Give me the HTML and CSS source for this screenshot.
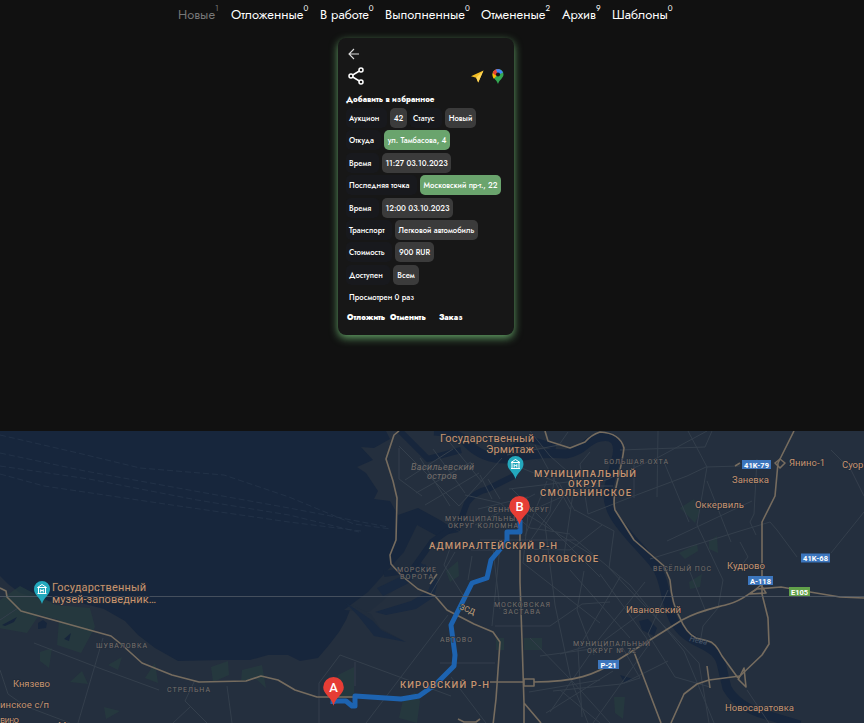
FILE: index.html
```html
<!DOCTYPE html>
<html lang="ru">
<head>
<meta charset="utf-8">
<title>Заказы</title>
<link rel="stylesheet" href="styles.css">
</head>
<body>
<nav class="tabs">
<a class="tab tab-new muted">Новые<sup>1</sup></a>
<a class="tab tab-delayed">Отложенные<sup>0</sup></a>
<a class="tab tab-work">В работе<sup>0</sup></a>
<a class="tab tab-done">Выполненные<sup>0</sup></a>
<a class="tab tab-cancelled">Отмененые<sup>2</sup></a>
<a class="tab tab-archive">Архив<sup>9</sup></a>
<a class="tab tab-templates">Шаблоны<sup>0</sup></a>
</nav>
<main class="content">
<article class="card">
<svg class="back" viewBox="0 0 12 12"><path d="M11 6H1M6 1L1 6l5 5"/></svg>
<div class="tools">
<svg class="share" viewBox="0 0 16 18"><path d="M13 3L3 9l10 6"/><circle cx="13" cy="3" r="2"/><circle cx="3" cy="9" r="2"/><circle cx="13" cy="15" r="2"/></svg>
<div class="navigators">
<svg class="arrow" viewBox="0 0 13 13"><path d="M12.5 .5L0 6.2 5.2 7.7 7.2 12.5z" fill="#f3bd25"/><path d="M12.5.5L5.2 7.7 7.2 12.5z" fill="#ffd75a"/></svg>
<svg class="gpin" viewBox="0 0 12 15"><path d="M6 0a5.5 5.5 0 0 1 5.5 5.5c0 3.5-4 5-5.5 9.5C4.600 10.500.5 9 .5 5.500A5.500 5.500 0 0 1 6 0z" fill="#34a853"/><path d="M1.700 2L6 5.500 1.800 9.700Q.5 8 .5 5.500.5 3.500 1.700 2z" fill="#fbbc04"/><path d="M1.700 2A5.500 5.500 0 0 1 7.600.2L3.500 6.500.7 4Q1 2.800 1.700 2z" fill="#ea4335"/><path d="M4 .4a5.500 5.500 0 0 1 7 3L6 6z" fill="#4285f4"/><circle cx="6" cy="5.500" r="2.100" fill="#171717"/></svg>
</div>
</div>
<b class="favorite">Добавить в избранное</b>
<div class="rows">
<div class="row"><span class="label w41">Аукцион</span><span class="value w17">42</span><span class="label w32">Статус</span><span class="value w31">Новый</span></div>
<div class="row"><span class="label w35">Откуда</span><span class="value green w66">ул. Тамбасова, 4</span></div>
<div class="row"><span class="label w33">Время</span><span class="value w69">11:27 03.10.2023</span></div>
<div class="row"><span class="label w71">Последняя точка</span><span class="value green w81">Московский пр-т., 22</span></div>
<div class="row"><span class="label w33">Время</span><span class="value w71">12:00 03.10.2023</span></div>
<div class="row"><span class="label w46">Транспорт</span><span class="value w83">Легковой автомобиль</span></div>
<div class="row"><span class="label w46">Стоимость</span><span class="value w39">900 RUR</span></div>
<div class="row"><span class="label w44">Доступен</span><span class="value w26">Всем</span></div>
</div>
<p class="views">Просмотрен 0 раз</p>
<div class="actions"><b class="act-delay">Отложить</b><b class="act-cancel">Отменить</b><b>Заказ</b></div>
</article>
</main>
<svg class="map" viewBox="0 431 864 292">
<rect class="land" y="431" width="864" height="292"/>
<path class="water" d="M0 431H386L390 439 374 448 361 447 373 460 357 467 366 473 378 491 374 499 390 501 398 515 418 508 440 520 459 532 428 538 412 548 402 565 390 578 378 592 366 600 352 605 346 620 339 632 329 645 318 658 300 661 288 655 268 655 250 660 222 660 178 661 155 648 138 635 125 621 104 609 81 603 45 601 20 593 8 584 0 576Z"/>
<g class="port"><path d="M344 610l24-18 18-20 18-20 13-27 22 12-20 18-14 25-26 24-10 8z"/><path d="M351 605l20 9 9 14 24 13-29-7-12-13z"/></g>
<g class="inlets"><path d="M377 588l25-12 16-15 6 4-15 18-26 13zM375 612l36-11 17-10 5-13-14-9 6-5 13 17-4 16-18 12-30 6zM345 602l28 19 8 9 25 12-32-6-15-19z"/></g>
<g class="parks"><path d="M0 600l20-14 36 19 34 3 5 19-14 26-24-8 2-25-20-5-12 18-28-5zM40 652l12-4-3 20-9-7zM70 682l12-11 6 13zM104 707l16 4-14 8zM108 665l14-8-4 13zM145 678l10-15 3 20zM211 667l17-6 1 14-16 7zM242 670l20-5 4 23-10-9-15 2zM338 675l16-8v31h-16zM403 700l12-8 5 9-3 22-18-5zM446 571l12-10 1 15-9 6zM496 638h8v12h-8zM524 638h18v12h-18zM680 508l14-9 6 13-5 11zM679 553l18-9 1 7-13 8zM709 541l8-5 1 17-9-4zM614 697l11 0-2 22-8-6zM689 582l13-8-2 13-10 2z"/></g>
<path class="river wide" d="M434 431q25 1 34 13 15 15 38 15 35-7 60-5C585 451 585 440 600 437S619 443 617 455L608 490C606 510 620 525 632 539L650 559C661 570 663 583 667 600S676 630 692 639 719 650 722 667L727 688Q738 708 770 716L800 725"/>
<path class="river" d="M516 475q-13 6-28 14-14 3-21 14l-10 27M400 431l28 28 33-9M384 574l28-4 20-28 21-15M499 456l30-17 27 8"/>
<path class="pond" d="M38 623l5-3 4 3-1 5-8 1zM64 639l7-6-2 8zM2 625l15-8-3 5-9 4zM639 621l9-2 9 9-3 8-12-6zM620 675l13 4-9 3z"/>
<g class="ferries"><path d="M0 435l78 18 62 15 84 7 65 22 65 27 37 5"/><path d="M0 453l85 18 104 19 100 18 99 19"/><path d="M0 466l89 13 108 21 92 15 70 17"/><path d="M0 474l44 12 121 18 124 18 72 9"/></g>
<g class="streets">
<path d="M0 670l8 24 17 12 45 17M34 643l65 25 60 22M103 638l-25 85M195 680l-10 21 22 22M190 707l-17 16M227 686l5 37M0 620l18-12M319 683l21-28 111 41M355 662v24M319 683v40M366 723l82-108M451 677l35 46M440 663h55"/>
<path d="M399 446l60 60 43-48M405 480l48-31M416 493l55-31M425 505l54-32M399 448v31l23 17M420 458l30 48M433 449l32 44M447 439l35 43M480 475l12 24M488 479l12 20M465 495l35 8 30 25 40 6M478 509l50-12M475 525l60-31M480 540h96M471 550h30M453 540l-9 25 22 35M455 552l-25 43M472 556l-4 24M493 549l7 60"/>
<path d="M507 455l52-10 9-13M519 467l40 16 16 28M509 489l67-8M519 516l65-29M530 431l20 25 34 30M535 445l35 64M547 481l-22 55M555 472l-5 40-24 35M575 478l-30 47 10 80 16 75 17 43M512 489l88 88M520 510l80 50M575 480l-12 82M528 515l-5 48 77 60M520 549l50 1 32-25M500 546l-8 80M495 626h55l32-22 28-2"/>
<path d="M590 452l-10 12 8 50 51-20 48-18 19-9 34-1M581 486h32M620 450l85-3 7-16M688 431l19 36-10 58 26 55-5 28-15 18-3 17M658 431l-1 66M634 460v38M573 494l84-36 50-27M667 541l85-40M689 522l-25-60M707 481l24 61M650 559l90-28 30-9 7 8 20 27"/>
<path d="M570 535l60 50 54 66 30 72M575 510l39 21-5 37 90 95 10 60M570 570l60 68M584 571l-7 39 17 45M620 577l-42 72 4 68M645 582l-50 62-35 10M650 607l-55 40-45 65M600 574l50 69-57 80M530 638l43 44 37 41M540 656l81-11 19 33-19 6-68 7M529 692l71-12M546 713l67-42"/>
<path d="M560 690l40 33M624 683l44-22M668 590l-20 44 27 43 35 10M688 567l18 45M740 542l8 15-7 9M757 459l-3 55-4 8 6 13M831 553l33-41M831 450l20 20 13 26M747 690l22 33"/>
</g>
<g class="highways">
<path d="M0 588l6 3 1 6 14 14 90 25 10 8 21 19 30 12 27 7 47-1 15-5 17 4 17 10 22 7h48M399 431l-5 4-8 24 7 22 4 17-1 42-6 15 1 9 11 12 16 13 17 7 12 14 27 14 19 8 7 10-4 57-3 26-9 23-4 14M430 584l7-10M458 719l6 3h12l4-3"/>
<path d="M520 520v62L522 640 524 703V723M490 682H524M524 679h10v7h-10zM534 682C575 682 595 675 618 660L682 620C700 610 715 608 729 604S746 595 757 589L781 587 810 592 840 597 864 598M524 703l17 20"/>
<path d="M794 431L778 463 775 496 762 522V594L768 618 769 644 762 655 740 676 709 680 697 684 684 694 671 723M634 652l27 71M707 666l3 22"/>
<path d="M738 678L722 656Q715 642 708 641L696 638Q686 633 680 618 672 605 670 580L664 566 634 540 615 510C611 495 621 475 624 448Q620 433 600 432 591 435 585 442L570 448 548 441 545 431M775 463l5-4 5 4-5 5zM735 466l5-3M738 680l6-12 2 19-8-8M750 594l11-9 5 8z"/>
</g>
<path class="route" d="M333 704v-3h13l6 5h3v-10l46 3 18-3 17-12 18-18 1-11-4-30 21-42 15-5 4-18 16-19v-9h13v-12"/>
<path class="seam" d="M0 596.500H864"/>
<g class="places">
<text x="52" y="591" textLength="94">Государственный</text><text x="52" y="602.500" textLength="104">музей-заповедник…</text>
<text x="440" y="441.500" textLength="94">Государственный</text><text x="486" y="453" textLength="48">Эрмитаж</text>
<g class="town"><text x="13" y="687" textLength="37">Князево</text><text x="0" y="708" textLength="49">инское с/п</text><text x="0" y="722.500" textLength="19">вино</text><text x="58" y="728.500">Марьино</text>
<text x="789" y="466" textLength="36">Янино-1</text><text x="842" y="468">Суор</text><text x="732" y="483" textLength="37">Заневка</text><text x="695" y="507.500" textLength="49">Оккервиль</text><text x="727" y="568.500" textLength="38">Кудрово</text><text x="626" y="612.500" textLength="55">Ивановский</text><text x="725" y="711" textLength="69">Новосаратовка</text></g>
</g>
<g class="districts"><text x="534" y="477" textLength="102">МУНИЦИПАЛЬНЫЙ</text><text x="568" y="486.500" textLength="35">ОКРУГ</text><text x="540" y="496" textLength="91">СМОЛЬНИНСКОЕ</text><text x="429" y="549" textLength="128">АДМИРАЛТЕЙСКИЙ Р-Н</text><text x="526" y="562" textLength="72">ВОЛКОВСКОЕ</text><text x="400" y="688" textLength="89">КИРОВСКИЙ Р-Н</text></g>
<g class="areas"><text x="96" y="648" textLength="51">ШУВАЛОВКА</text><text x="167" y="692" textLength="43">СТРЕЛЬНА</text><text x="604" y="463.500" textLength="64">БОЛЬШАЯ ОХТА</text><text x="488" y="512" textLength="61">СЕННОЙ ОКРУГ</text><text x="445" y="521" textLength="76">МУНИЦИПАЛЬНЫЙ</text><text x="448" y="528" textLength="70">ОКРУГ КОЛОМНА</text><text x="397" y="572" textLength="39">МОРСКИЕ</text><text x="400" y="579" textLength="33">ВОРОТА</text><text x="494" y="606.500" textLength="56">МОСКОВСКАЯ</text><text x="503" y="613.500" textLength="37">ЗАСТАВА</text><text x="440" y="641.500" textLength="32">АВТОВО</text><text x="653" y="571" textLength="58">ВЕСЁЛЫЙ ПОС</text><text x="573" y="646" textLength="77">МУНИЦИПАЛЬНЫЙ</text><text x="587" y="653" textLength="49">ОКРУГ № 72</text></g>
<g class="island"><text x="411" y="470" textLength="63">Васильевский</text><text x="427" y="479" textLength="30">остров</text></g>
<text class="river-name" transform="translate(689 641) rotate(12)">Нева</text>
<text class="road-name" transform="translate(459 609) rotate(22)">ЗСД</text>
<g class="shields"><rect x="742" y="460" width="29" height="9"/><rect x="801" y="553.500" width="29" height="9"/><rect x="748" y="576" width="25" height="9"/><rect x="598" y="660" width="21" height="9"/><rect class="euro" x="789" y="587" width="21" height="9"/>
<text x="756.500" y="467.500" textLength="25">41K-79</text><text x="815.500" y="561" textLength="25">41K-68</text><text x="760.500" y="583.500" textLength="21">A-118</text><text x="608.500" y="667.500" textLength="16">P-21</text><text x="799.500" y="594.500" textLength="17">E105</text></g>
<g transform="translate(42 581)"><path class="museum" d="M0 0a8 8 0 0 1 8 8c0 6-6 8-8 15-2-7-8-9-8-15a8 8 0 0 1 8-8z"/><path class="museum-icon" d="M-4.500 6.500L0 3.500 4.500 6.500zM-3.500 7v5M3.500 7v5M-4.500 12.500h9M-1.300 11.500v-3l1.300 1.500 1.300-1.500v3"/></g>
<g transform="translate(515.500 456)"><path class="museum" d="M0 0a8 8 0 0 1 8 8c0 6-6 8-8 15-2-7-8-9-8-15a8 8 0 0 1 8-8z"/><path class="museum-icon" d="M-4.500 6.500L0 3.500 4.500 6.500zM-3.500 7v5M3.500 7v5M-4.500 12.500h9M-1.300 11.500v-3l1.300 1.500 1.300-1.500v3"/></g>
<g class="pin" transform="translate(333.500 677)"><path d="M0 0a10.300 10.300 0 0 1 10.300 10.300c0 7-8 9.500-10.300 18.500C-2.300 19.800-10.300 17.300-10.300 10.300A10.300 10.300 0 0 1 0 0z"/><text y="15">A</text></g>
<g class="pin" transform="translate(519.500 496)"><path d="M0 0a10.300 10.300 0 0 1 10.300 10.300c0 7-8 9.500-10.300 18.500C-2.300 19.800-10.300 17.300-10.300 10.300A10.300 10.300 0 0 1 0 0z"/><text y="15">B</text></g>
</svg>
</body>
</html>
```
FILE: styles.css
```css
* { box-sizing: border-box; }
body { margin: 0; height: 723px; display: flex; flex-direction: column; overflow: hidden; background: #111; color: #fff; font-family: Jost, Lato, sans-serif; }
.tabs { height: 38px; padding: 4px 0 0 178px; display: flex; flex: none; }
.tab { font-size: 12.9px; line-height: 17px; white-space: nowrap; flex: none; }
.tab sup { font-size: 8px; line-height: 8px; vertical-align: 8px; }
.muted { color: #777; }
.tab-new { width: 53px; } .tab-delayed { width: 89px; } .tab-work { width: 65px; }
.tab-done { width: 96px; } .tab-cancelled { width: 81px; } .tab-archive { width: 50px; }
.content { height: 393px; flex: none; padding-left: 338px; }
.card { width: 176px; height: 297px; padding: 10px 8px 0; border-radius: 8px; background: #171717; box-shadow: 0 3px 8px #62a065; display: flex; flex-direction: column; }
.back { width: 12px; height: 12px; margin-left: 2px; fill: none; stroke: #ddd; stroke-width: 1.1; flex: none; }
.tools { display: flex; justify-content: space-between; align-items: center; height: 32px; padding: 0 2px; flex: none; }
.share { width: 16px; height: 18px; fill: none; stroke: #fff; stroke-width: 1.5; }
.share circle { fill: #171717; }
.navigators { display: flex; gap: 8px; align-items: center; }
.arrow { width: 13px; height: 13px; }
.gpin { width: 12px; height: 15px; }
.favorite { font-size: 7.8px; line-height: 12px; margin-top: 2px; font-weight: 800; }
.rows { margin-top: 2px; display: grid; grid-auto-rows: 20px; row-gap: 2.4px; font-size: 7.75px; font-weight: 500; }
.row { display: flex; gap: 3px; line-height: 21px; white-space: nowrap; }
.label, .value { flex: none; height: 20px; border-radius: 5px; }
.label { background: #18191d; padding-left: 3px; }
.value { background: #3b3b3b; text-align: center; }
.green { background: #6aa46d; }
.w17 { width: 17px; } .w26 { width: 26px; } .w31 { width: 31px; } .w32 { width: 32px; } .w33 { width: 33px; } .w35 { width: 35px; } .w39 { width: 39px; } .w41 { width: 41px; } .w44 { width: 44px; } .w46 { width: 46px; } .w66 { width: 66px; } .w69 { width: 69px; } .w71 { width: 71px; } .w81 { width: 81px; } .w83 { width: 83px; }
.views { margin: 7px 0 0 3px; font-size: 7.75px; line-height: 11px; font-weight: 500; }
.actions { display: flex; margin: 9px 0 0 1px; font-size: 7.6px; line-height: 11px; font-weight: 800; }
.act-delay { width: 43px; } .act-cancel { width: 49px; }
.map { display: block; width: 864px; height: 292px; flex: none; font-family: Roboto, sans-serif; }
.land { fill: #242f3e; }
.water, .pond { fill: #17263c; }
.port { fill: #212d3d; }
.inlets { fill: #192940; }
.parks { fill: #263c3f; opacity: .7; }
.river { fill: none; stroke: #17263c; stroke-width: 6; }
.wide { stroke-width: 9; }
.ferries { fill: none; stroke: #26364c; stroke-width: .7; stroke-dasharray: 6 3; }
.streets { fill: none; stroke: #343f4c; stroke-width: 1; }
.highways { fill: none; stroke: #766c5f; stroke-width: 1.6; stroke-linejoin: round; }
.route { fill: none; stroke: #1d63b0; stroke-width: 5; stroke-linejoin: round; }
.seam { stroke: #59616c; stroke-width: 1; opacity: .7; }
.places, .districts { fill: #c79470; stroke: #202b39; stroke-width: 1.5; paint-order: stroke; }
.places { font-size: 11px; }
.town { font-size: 9.5px; }
.districts { font-size: 9.5px; font-weight: 500; }
.areas { font-size: 7px; fill: #77706b; stroke: #222d3b; stroke-width: 1; paint-order: stroke; }
.island { font-size: 9px; font-style: italic; fill: #77706b; }
.river-name { font-size: 8px; fill: #48576a; font-style: italic; }
.road-name { font-size: 8px; fill: #c0a17c; stroke: #242f3e; stroke-width: 1; paint-order: stroke; }
.shields { font-size: 7.5px; font-weight: 700; text-anchor: middle; fill: #fff; }
.shields rect { fill: #3c76bd; }
.shields .euro { fill: #62a14a; }
.museum { fill: #23a8bd; }
.museum-icon { fill: none; stroke: #fff; stroke-width: 1; }
.pin path { fill: #e63d35; }
.pin text { font-size: 13px; font-weight: 500; fill: #fff; text-anchor: middle; }
```
